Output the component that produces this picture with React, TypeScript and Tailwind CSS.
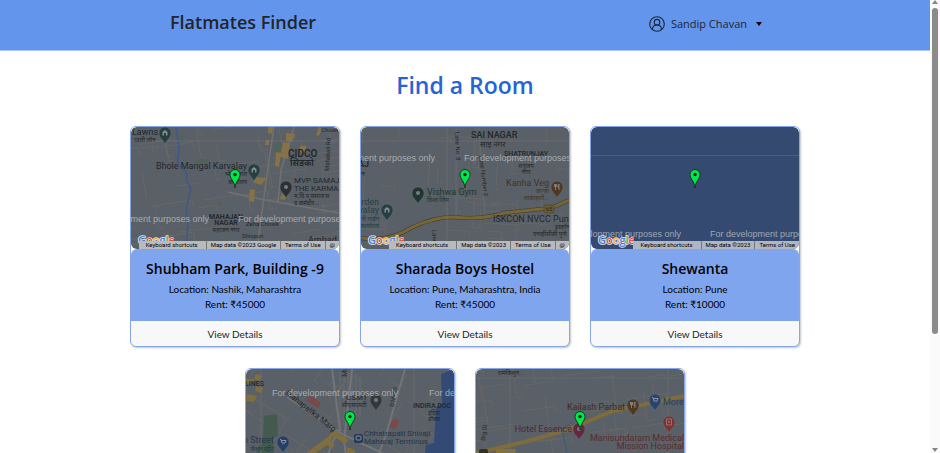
import type { ReactNode } from "react";

type Room = {
  name: string;
  location: string;
  rent: number;
  map: ReactNode;
  water?: boolean;
  attribution: string[];
};

type LabelProps = {
  x: number;
  y: number;
  children: ReactNode;
  size?: number;
  fill?: string;
  anchor?: "start" | "middle" | "end";
  weight?: number;
  rotate?: number;
};

function Label({ x, y, children, size = 9, fill = "#24272b", anchor = "start", weight = 400, rotate = 0 }: LabelProps) {
  return (
    <text
      x={x}
      y={y}
      fontSize={size}
      fill={fill}
      textAnchor={anchor}
      fontWeight={weight}
      transform={rotate ? `rotate(${rotate} ${x} ${y})` : undefined}
    >
      {children}
    </text>
  );
}

function Watermark({ x, y }: { x: number; y: number }) {
  return (
    <text x={x} y={y} fontSize={9} fill="#c4c7cb" fillOpacity={0.75} className="font-['Liberation_Sans',Arial,sans-serif]">
      For development purposes only
    </text>
  );
}

function Place({ x, y, color, children }: { x: number; y: number; color: string; children?: ReactNode }) {
  return (
    <g transform={`translate(${x} ${y})`}>
      <path d="M0 11 C-1.5 7 -6 5 -6 0 A6 6 0 0 1 6 0 C6 5 1.5 7 0 11Z" fill={color} stroke="#6b7078" strokeWidth=".5" />
      {children ?? <circle r="2" fill="#777d84" />}
    </g>
  );
}

const hall = <path d="M-2.5 2.5V-1L0-3L2.5-1V2.5H1V0H-1V2.5Z" fill="#858b91" />;
const fork = <path d="M-1.5-3V3M-2.6-3V-.5H-.4V-3M2 3V-3Q.8-2 1 .5H2" fill="none" stroke="#8d9094" strokeWidth=".8" />;
const cart = <path d="M-3-2.5H-2L-1 1H2L3-1.5H-1.7M-.7 2.4h.3M1.7 2.4H2" fill="none" stroke="#8d949d" strokeWidth="1" />;

/* Deterministic side streets, so each neighbourhood keeps its own layout. */
function Streets({ seed, tilt }: { seed: number; tilt: number }) {
  let s = seed;
  const next = () => {
    s = (s * 16807) % 2147483647;
    return s / 2147483647;
  };
  let d = "";
  for (let i = 0; i < 120; i++) {
    const x = Math.round(next() * 280 - 35);
    const y = Math.round(next() * 200 - 35);
    const len = Math.round(10 + next() * 32);
    d += i % 2 ? `M${x} ${y}h${len}v${Math.round(next() * 8)}` : `M${x} ${y}v${len}h${Math.round(next() * 9)}`;
  }
  return <path d={d} transform={`rotate(${tilt} 104 61)`} fill="none" stroke="#686768" strokeWidth=".9" />;
}

const nashik = (
  <>
    <Streets seed={4271} tilt={-9} />
    <g fill="#506359">
      <path d="M66 34l4-3 7 2-1 4-8 1-3-2zM48 8l5-2 0 8-4 1zM86 74l5 1-1 4-4-1zM178 55l6-5-1 7-5 2z" />
      <circle cx="147" cy="20" r="4.500" />
    </g>
    <path d="M45 0C46 12 50 20 47 30S60 43 55 52L60 62C58 72 53 80 57 96L55 122" fill="none" stroke="#3f5888" strokeWidth="1.500" />
    <g fill="none" stroke="#717173" strokeWidth="1.500">
      <path d="M143 0L137 40 126 122M163 0L150 43 147 75M97 65L129 72 208 86" />
    </g>
    <g fill="#857347">
      <path d="M137 0h5l-1 7-4-1zM135 13h3v5h-4zM155 6l9 1-3 8-6-1zM152 15l7 1-2 16-8-2zM145 25l5 1-2 14-4-1zM126 50l10 1-6 7-8-3zM119 62l5 1-1 12-5-1zM151 66l4 1-1 6-5-1zM188 0l3 1-3 8-3-1zM169 19h6l-1 7-5-1z" />
    </g>
    <path d="M0 14H208" stroke="#777a7d" strokeWidth=".5" />
    <Label x={1} y={8}>Lawns</Label>
    <Label x={0} y={15} size={6}>ाउली लॉन</Label>
    <Place x={34} y={6} color="#263f3f">{hall}</Place>
    <Label x={116} y={42} anchor="end">Bhole Mangal Karvalay</Label>
    <Label x={116} y={49} size={6} anchor="end">भोले मंगल</Label>
    <Label x={116} y={57} size={6} anchor="end">कार्यालय</Label>
    <Place x={123} y={43} color="#263f3f">{hall}</Place>
    <Label x={157} y={30} size={10} weight={600}>CIDCO</Label>
    <Label x={159} y={39} size={9} weight={600}>सिडको</Label>
    <Label x={198} y={44} size={6} rotate={-87}>Mahakali Rd</Label>
    <Label x={190} y={5} size={6}>Chowk</Label>
    <Place x={155} y={60} color="#2c3035" />
    <Label x={163} y={56} size={8}>MVP SAMAJ</Label>
    <Label x={163} y={64} size={8}>THE KARMA</Label>
    <Label x={163} y={71} size={6}>म.वि.प्र समाज'स</Label>
    <Label x={163} y={78} size={6}>द कर्मवीर...</Label>
    <Label x={95} y={92} size={7} anchor="middle" weight={600}>MAHAJAN</Label>
    <Label x={95} y={98} size={7} anchor="middle" weight={600}>NAGAR</Label>
    <Label x={95} y={105} size={6} anchor="middle">महाजन नगर</Label>
    <Label x={115} y={99} size={6}>Zeha Chowk</Label>
    <Label x={111} y={111} size={6}>Shivpuri</Label>
    <Label x={113} y={118} size={6}>Chowk</Label>
    <Label x={177} y={116}>Ambad L</Label>
    <Watermark x={-48} y={95} />
    <Watermark x={107} y={95} />
  </>
);

const pune = (
  <>
    <Streets seed={9133} tilt={3} />
    <path d="M0 111Q28 115 50 101Q72 90 92 90Q122 93 143 86L190 81L208 73" fill="none" stroke="#3f3a28" strokeWidth="4" />
    <path d="M0 111Q28 115 50 101Q72 90 92 90Q122 93 143 86L190 81L208 73" fill="none" stroke="#776738" strokeWidth="3" />
    <path d="M95 0V89M118 0L124 88M86 0V122M0 14H208" stroke="#707377" strokeWidth=".6" />
    <rect x="183" y="78" width="10" height="8" rx="2" fill="#6e5d2c" stroke="#3f3a28" strokeWidth=".5" />
    <Label x={188} y={84} size={6} anchor="middle">65</Label>
    <Label x={110} y={11} weight={500}>SAI NAGAR</Label>
    <Label x={119} y={20} size={8}>साइ नगर</Label>
    <Label x={143} y={29} size={7} weight={500}>SHATRUNJAY</Label>
    <Label x={165} y={41} size={6} anchor="middle">शत्रुंजय</Label>
    <Label x={165} y={47} size={6} anchor="middle">नगर</Label>
    <Label x={94} y={5} size={6} rotate={88}>Lane No. 8</Label>
    <Label x={118} y={29} size={6} rotate={83}>Lane Number 2</Label>
    <Label x={-3} y={40} weight={600}>AJ</Label>
    <Label x={0} y={49} size={7}>न</Label>
    <Place x={57} y={66} color="#20372f" />
    <Label x={66} y={68} fill="#20372f">Vishwa Gym</Label>
    <Label x={66} y={75} size={6} fill="#20372f">विश्व जिम</Label>
    <Place x={26} y={83} color="#263f46">{hall}</Place>
    <Label x={18} y={78} fill="#263f46" anchor="end">arden</Label>
    <Label x={18} y={86} fill="#263f46" anchor="end">valay</Label>
    <Label x={18} y={94} size={6} fill="#263f46" anchor="end">नी गार्डन</Label>
    <Label x={18} y={101} size={6} fill="#263f46" anchor="end">कार्यालय</Label>
    <Place x={196} y={60} color="#503923">{fork}</Place>
    <Label x={188} y={59} anchor="end" fill="#443325">Kanha Veg</Label>
    <Label x={188} y={66} size={6} anchor="end" fill="#443325">कान्हा</Label>
    <Label x={188} y={73} size={6} anchor="end" fill="#443325">शाकाहारी...</Label>
    <Label x={132} y={95}>ISKCON NVCC Pune</Label>
    <Label x={194} y={102} size={6}>इस्कॉन</Label>
    <Label x={172} y={109} size={6}>एनव्हीसीसी पुणे</Label>
    <Label x={71} y={103} size={6} rotate={85}>Lane</Label>
    <Watermark x={-52} y={34} />
    <Watermark x={103} y={34} />
  </>
);

const water = (
  <>
    <path d="M0 28.500H208" stroke="#516483" strokeWidth=".8" />
    <Watermark x={-36} y={110} />
    <Watermark x={119} y={110} />
  </>
);

const mumbai = (
  <>
    <Streets seed={781} tilt={32} />
    <path d="M195 5L208 0V122H174L180 76 188 74 190 38 196 34Z" fill="#334a75" />
    <path d="M18 47L31 45 32 67 27 70 28 84 10 84 17 68Z" fill="#435b4e" />
    <path d="M86 0L94 61 87 72 68 122M106 0L98 72 105 122M159 0L140 66 133 84M41 28L98 66 136 84" fill="none" stroke="#727477" strokeWidth="2" />
    <path d="M94 3V56M98 3V56M102 3V56M106 3V53M110 5V48M114 7V47" stroke="#70747a" strokeWidth=".7" />
    <g fill="#806f3c">
      <path d="M0 10h8l-1 5-7-1zM10 5l6 2-3 5-5-2zM10 17l7 2-2 5-6-2zM1 25l10 2-3 6-8-1zM88 61l15 10-4 4-12-8-2 7 4 2-3 4-5-4-20 14-5-3 26-19zM101 78l8 3-1 16h-8z" />
    </g>
    <g fill="#7c4848">
      <path d="M62 29l3-2 10 7-3 5-12-8zM147 50l6 1-3 9-7-2z" />
    </g>
    <path d="M15 0V84M168 0V84" stroke="#74777b" strokeWidth=".5" />
    <Label x={-1} y={17} size={7} weight={500}>LINES</Label>
    <Label x={39} y={25} size={8} rotate={38}>Mahapalika Marg</Label>
    <Label x={101} y={8} size={8} rotate={-90}>Marg</Label>
    <Label x={100} y={31} size={8}>CSMT</Label>
    <Label x={96} y={38} size={6}>सीएसएमटी</Label>
    <Label x={148} y={38} size={6} rotate={-82}>D'Mello</Label>
    <Place x={130} y={31} color="#34383d" />
    <Label x={167} y={39} size={7} weight={500}>INDIRA DOC</Label>
    <Label x={182} y={46} size={6}>इंदिरा</Label>
    <Label x={182} y={52} size={6}>डॉक्स</Label>
    <Place x={37} y={73} color="#263f68">{cart}</Place>
    <Label x={28} y={74} anchor="end" fill="#26364d">n Street</Label>
    <Label x={28} y={82} size={6} anchor="end" fill="#26364d">फॅशन स्ट्रीट</Label>
    <g transform="translate(108 65)">
      <rect width="9" height="9" rx="2" fill="#233957" />
      <rect x="2" y="2" width="5" height="4" rx="1" fill="none" stroke="#86909e" />
    </g>
    <Label x={118} y={67} size={8} fill="#26364d">Chhatrapati Shivaji</Label>
    <Label x={118} y={75} size={8} fill="#26364d">Maharaj Terminus</Label>
    <Watermark x={26} y={27} />
    <Watermark x={183} y={27} />
  </>
);

const medical = (
  <>
    <Streets seed={6607} tilt={-8} />
    <path d="M0 84L48 73 91 61 137 42 208 27" fill="none" stroke="#7d6c3c" strokeWidth="4" />
    <path d="M86 60L98 52M86 60L91 84" stroke="#40587f" />
    <path d="M20 80H40L39 86H20Z" fill="#857239" />
    <path d="M34 0V84M192 0V84M0 9H208" stroke="#707377" strokeWidth=".5" />
    <Label x={22} y={6} size={6}>रामकिशुन...</Label>
    <Place x={157} y={36} color="#50391f">{fork}</Place>
    <Label x={149} y={41} anchor="end" fill="#432b23">Kailash Parbat</Label>
    <Place x={179} y={31} color="#29456f">{cart}</Place>
    <Label x={187} y={36} fill="#29405f">More</Label>
    <Place x={103} y={60} color="#63273f" />
    <Label x={96} y={63} anchor="end" fill="#54253a">Hotel Essence</Label>
    <Place x={193} y={53} color="#793434">
      <path d="M-2.500-3H2.500V3H-2.500ZM-1 0H1M0-1V1" fill="none" stroke="#a08082" strokeWidth=".8" />
    </Place>
    <Label x={208} y={72} anchor="end" fill="#592b2f">Manisundaram Medical</Label>
    <Label x={208} y={80} anchor="end" fill="#592b2f">Mission Hospital</Label>
    <rect x="3" y="80" width="9" height="9" rx="2" fill="#342f22" />
    <Label x={9} y={72} size={6} rotate={-83}>Brg St</Label>
  </>
);

const rooms: Room[] = [
  {
    name: "Shubham Park, Building -9",
    location: "Nashik, Maharashtra",
    rent: 45000,
    map: nashik,
    attribution: ["Keyboard shortcuts", "Map data ©2023 Google", "Terms of Use", "@"],
  },
  {
    name: "Sharada Boys Hostel",
    location: "Pune, Maharashtra, India",
    rent: 45000,
    map: pune,
    attribution: ["Keyboard shortcuts", "Map data ©2023", "Terms of Use", "@"],
  },
  {
    name: "Shewanta",
    location: "Pune",
    rent: 10000,
    map: water,
    water: true,
    attribution: ["Keyboard shortcuts", "Map data ©2023", "Terms of Use"],
  },
  {
    name: "Azad Residency",
    location: "Mumbai, Maharashtra",
    rent: 30000,
    map: mumbai,
    attribution: ["Keyboard shortcuts", "Map data ©2023", "Terms of Use"],
  },
  {
    name: "Green View",
    location: "Durgapur",
    rent: 12000,
    map: medical,
    attribution: ["Keyboard shortcuts", "Map data ©2023", "Terms of Use"],
  },
];

function GoogleLogo() {
  return (
    <svg
      viewBox="0 0 37 14"
      className="absolute bottom-px left-1.5 h-3.5 w-[37px] font-['Open_Sans',sans-serif]"
      aria-label="Google"
    >
      <text x="1" y="10" fontSize="11" fontWeight="600" stroke="#e4e6e9" strokeWidth="1.500" paintOrder="stroke">
        <tspan fill="#4a7de0">G</tspan>
        <tspan fill="#d9534a">o</tspan>
        <tspan fill="#e5b23c">o</tspan>
        <tspan fill="#4a7de0">g</tspan>
        <tspan fill="#4ca566">l</tspan>
        <tspan fill="#d9534a">e</tspan>
      </text>
    </svg>
  );
}

function RoomMap({ room }: { room: Room }) {
  return (
    <div className={`relative h-[122px] overflow-hidden rounded-md ${room.water ? "bg-[#354a70]" : "bg-[#596067]"}`}>
      <svg
        viewBox="0 0 208 122"
        preserveAspectRatio="xMidYMid slice"
        className="size-full font-[Roboto,'Noto_Sans',sans-serif]"
        aria-hidden="true"
      >
        {room.map}
        <path
          d="M104 61 C103.500 54 99 52 99 47.500 A5 5 0 0 1 109 47.500 C109 52 104.500 54 104 61Z"
          fill="#00e64d"
          stroke="#102b1a"
          strokeWidth=".9"
        />
        <circle cx="104" cy="47.500" r="1.700" fill="#092412" />
      </svg>
      <GoogleLogo />
      <div
        className={`absolute right-0 bottom-0 flex h-2 divide-x divide-[#777] font-[Roboto,sans-serif] text-[6px] leading-2 text-black ${
          room.water ? "bg-[#afb6c4]" : "bg-[#b9babc]"
        }`}
      >
        {room.attribution.map((item) => (
          <a key={item} href="#map" className="px-1 whitespace-nowrap first:pr-2 first:pl-[7px]">
            {item}
          </a>
        ))}
      </div>
    </div>
  );
}

function RoomCard({ room }: { room: Room }) {
  return (
    <article className="w-[210px] overflow-hidden rounded-md border border-[#86a7e4] bg-[#f8f8f8] shadow-[1px_1px_2px_#c0c5ce]">
      <div className="bg-white">
        <RoomMap room={room} />
        <div className="h-[72px] rounded-t-md bg-[#80a5ef] pt-[11px] text-center text-black">
          <h2 className="text-sm leading-[18px] font-semibold">{room.name}</h2>
          <div className="mt-1 font-['Segoe_UI',Lato,'Noto_Sans',sans-serif] text-[10px] leading-[15px]">
            <p>Location: {room.location}</p>
            <p>Rent: ₹{room.rent}</p>
          </div>
        </div>
      </div>
      <button
        type="button"
        className="block h-[25px] w-full pt-0.5 font-['Segoe_UI',Lato,'Noto_Sans',sans-serif] text-[10px] text-[#212529]"
      >
        View Details
      </button>
    </article>
  );
}

export default function App() {
  return (
    <div className="flex h-screen overflow-hidden bg-white font-['Segoe_UI','Open_Sans','Noto_Sans',sans-serif]">
      <div className="min-w-0 flex-1">
        <header className="flex h-[51px] items-start justify-between border-b border-[#a9c4f5] bg-[#6495ed] pr-[167px] pl-[170px]">
          <a href="#home" className="pt-2 text-lg leading-7 font-semibold text-[#212529]">
            Flatmates Finder
          </a>
          <button type="button" className="flex h-12 items-center gap-1.5 text-[11px] text-[#1b2637]">
            <svg viewBox="0 0 16 16" className="size-4 fill-none stroke-current" strokeWidth="1.100" aria-hidden="true">
              <circle cx="8" cy="8" r="7.300" />
              <circle cx="8" cy="6.200" r="2.800" />
              <path d="M3.500 13.500C3.500 10.500 5.500 9 8 9S12.500 10.500 12.500 13.500" />
            </svg>
            Sandip Chavan
            <svg viewBox="0 0 8 4" className="ml-0.5 h-1 w-2 fill-black" aria-hidden="true">
              <path d="M1 0H7L4 4Z" />
            </svg>
          </button>
        </header>
        <main>
          <h1 className="pt-[18px] text-center text-[23px] leading-8 font-semibold text-[#2563d8]">Find a Room</h1>
          <div className="mx-auto mt-[25px] flex max-w-[700px] flex-wrap justify-center gap-x-5 gap-y-[21px]">
            {rooms.map((room) => (
              <RoomCard key={room.name} room={room} />
            ))}
          </div>
        </main>
      </div>
      <div className="flex w-2.5 flex-col items-center bg-[#fafafa]" aria-hidden="true">
        <svg viewBox="0 0 6 4" className="h-1 w-1.5 fill-[#858585]">
          <path d="M0 4H6L3 0Z" />
        </svg>
        <div className="mt-1 h-[72%] w-1.5 rounded-full bg-[#8b8b8b]" />
        <svg viewBox="0 0 6 4" className="mt-auto mb-px h-1 w-1.5 fill-[#858585]">
          <path d="M0 0H6L3 4Z" />
        </svg>
      </div>
    </div>
  );
}
